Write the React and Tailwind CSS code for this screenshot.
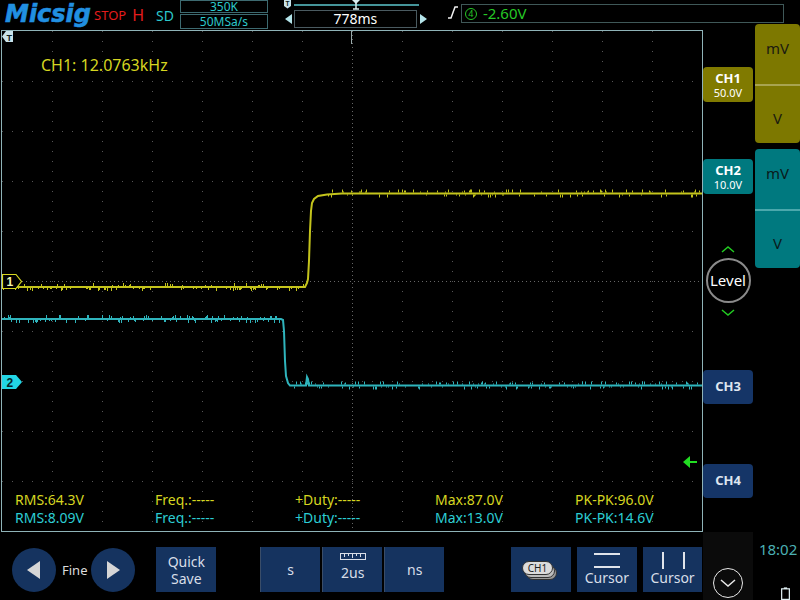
import React from "react";

function rng(seed) {
  let s = seed;
  return () => {
    s = (s * 1103515245 + 12345) % 2147483648;
    return s / 2147483648;
  };
}

function ticks(seed, x0, x1, y, density, upProb) {
  const r = rng(seed);
  let d = "";
  for (let x = x0; x < x1; x += 1) {
    if (r() < density) {
      const h = 1 + Math.floor(r() * 3);
      if (r() < upProb) d += `M${x + 0.5} ${y - 1} v${-h} `;
      else d += `M${x + 0.5} ${y + 1} v${h} `;
    }
  }
  return d;
}

const YELLOW_PTS =
  "0,256 303,256 305,252 306,248 307,230 308,200 309,180 310,172 312,168 316,165 325,163.5 340,162.5 700,162.5";
const CYAN_PTS =
  "0,288 279,288 281,289 282,300 283,330 284,345 286,352 288,354.5 304,354.5 305,346 306,348 307,354.5 700,354.5";

function Grid() {
  const vx = [50, 100, 150, 200, 250, 300, 400, 450, 500, 550, 600, 650];
  const hy = [50, 100, 150, 200, 300, 350, 400, 450];
  return (
    <g>
      {vx.map((x) => (
        <line key={"v" + x} x1={x + 0.5} y1={0} x2={x + 0.5} y2={500} stroke="#555" strokeWidth="1" strokeDasharray="1 9" />
      ))}
      {hy.map((y) => (
        <line key={"h" + y} x1={0} y1={y + 0.5} x2={700} y2={y + 0.5} stroke="#555" strokeWidth="1" strokeDasharray="1 9" />
      ))}
      <line x1={350.5} y1={0} x2={350.5} y2={500} stroke="#666" strokeWidth="1" strokeDasharray="1 3" />
      <line x1={0} y1={250.5} x2={700} y2={250.5} stroke="#666" strokeWidth="1" strokeDasharray="1 3" />
      <line x1={349.5} y1={0} x2={349.5} y2={13} stroke="#9aa" strokeWidth="1" />
    </g>
  );
}

function Screen() {
  const yT1 = ticks(7, 0, 302, 256, 0.3, 0.25);
  const yT2 = ticks(11, 318, 700, 162.5, 0.22, 0.6);
  const cT1 = ticks(23, 0, 278, 288, 0.3, 0.5);
  const cT2 = ticks(31, 290, 700, 354.5, 0.3, 0.5);
  return (
    <div className="relative ml-[1px] w-[702px] h-[502px] border border-[#8fb3b8] flex flex-col">
      <svg className="absolute left-0 top-0" width="700" height="500" viewBox="0 0 700 500">
        <Grid />
        <polyline points={YELLOW_PTS} fill="none" stroke="#c4c41c" strokeWidth="2" />
        <path d={yT1 + yT2} stroke="#c4c41c" strokeWidth="1" />
        <polyline points={CYAN_PTS} fill="none" stroke="#2fb4bc" strokeWidth="2" />
        <path d={cT1 + cT2} stroke="#2fb4bc" strokeWidth="1" />
        {/* T marker */}
        <polygon points="0,5.5 4,0 11,0 11,11 4,11" fill="#c8e2ea" />
        <text x="4.5" y="9.5" fontSize="9" fontWeight="bold" fill="#102020" fontFamily="Liberation Sans, sans-serif">T</text>
        {/* marker 1 */}
        <polygon points="0.5,243.5 14,243.5 19.5,250.5 14,257.5 0.5,257.5" fill="#000" stroke="#d8d820" strokeWidth="1.2" />
        <text x="4.5" y="255" fontSize="12" fontWeight="bold" fill="#f4f4b0" fontFamily="Liberation Sans, sans-serif">1</text>
        {/* marker 2 */}
        <polygon points="0,344 14,344 20,351 14,358 0,358" fill="#22d6e6" />
        <text x="4.5" y="355.5" fontSize="12" fontWeight="bold" fill="#06252a" fontFamily="Liberation Sans, sans-serif">2</text>
        {/* trigger level arrow */}
        <polygon points="681,431 688,425 688,437" fill="#22dd22" />
        <line x1="687" y1="431" x2="695" y2="431" stroke="#22dd22" strokeWidth="2" />
      </svg>
      <div className="relative pl-[39px] pt-[24px] text-[16px] leading-[20px] text-[#d6d620]">CH1: 12.0763kHz</div>
      <div className="flex-1" />
      <div className="relative grid grid-cols-[repeat(5,140px)] pl-[13px] pb-[4px] text-[14px] leading-[18px]">
        <span className="text-[#d6d620]">RMS:64.3V</span>
        <span className="text-[#d6d620]">Freq.:-----</span>
        <span className="text-[#d6d620]">+Duty:-----</span>
        <span className="text-[#d6d620]">Max:87.0V</span>
        <span className="text-[#d6d620]">PK-PK:96.0V</span>
        <span className="text-[#2ccdd4]">RMS:8.09V</span>
        <span className="text-[#2ccdd4]">Freq.:-----</span>
        <span className="text-[#2ccdd4]">+Duty:-----</span>
        <span className="text-[#2ccdd4]">Max:13.0V</span>
        <span className="text-[#2ccdd4]">PK-PK:14.6V</span>
      </div>
    </div>
  );
}

function Chevron({ down }) {
  return (
    <svg width="14" height="7" viewBox="0 0 14 7" className="mx-auto block">
      {down ? (
        <polyline points="1,1 7,6 13,1" fill="none" stroke="#22cc22" strokeWidth="1.5" />
      ) : (
        <polyline points="1,6 7,1 13,6" fill="none" stroke="#22cc22" strokeWidth="1.5" />
      )}
    </svg>
  );
}

function RightPanel() {
  return (
    <div className="w-[97px] flex">
      <div className="w-[50px] flex flex-col">
        <div className="mt-[37px] h-[35px] rounded-[4px] bg-[#807a00] flex flex-col items-center justify-center text-white">
          <span className="text-[13px] leading-[15px] font-bold">CH1</span>
          <span className="text-[11px] leading-[13px]">50.0V</span>
        </div>
        <div className="mt-[57px] h-[35px] rounded-[4px] bg-[#00797f] flex flex-col items-center justify-center text-white">
          <span className="text-[13px] leading-[15px] font-bold">CH2</span>
          <span className="text-[11px] leading-[13px]">10.0V</span>
        </div>
        <div className="mt-[52px]">
          <Chevron />
        </div>
        <div className="mt-[5px] mx-auto w-[45px] h-[45px] rounded-full border-2 border-[#8a8a8a] flex items-center justify-center text-[15px] text-white">
          Level
        </div>
        <div className="mt-[6px]">
          <Chevron down />
        </div>
        <div className="mt-[54px] h-[34px] rounded-[4px] bg-[#153567] flex items-center justify-center text-[13px] font-bold text-[#dfe6f0]">
          CH3
        </div>
        <div className="mt-[60px] h-[34px] rounded-[4px] bg-[#153567] flex items-center justify-center text-[13px] font-bold text-[#dfe6f0]">
          CH4
        </div>
      </div>
      <div className="ml-[2px] w-[45px] -mt-[6px] flex flex-col">
        <div className="h-[119px] rounded-[4px] bg-[#7d7800] flex flex-col text-[15px] text-[#1a1a10]">
          <div className="h-[60px] pt-[14px] text-center leading-[20px]">mV</div>
          <div className="h-[2px] bg-[#a8a450]" />
          <div className="flex-1 pt-[22px] text-center leading-[20px]">V</div>
        </div>
        <div className="mt-[6px] h-[119px] rounded-[4px] bg-[#00797f] flex flex-col text-[15px] text-[#0a1a1a]">
          <div className="h-[60px] pt-[14px] text-center leading-[20px]">mV</div>
          <div className="h-[2px] bg-[#4aa8ac]" />
          <div className="flex-1 pt-[22px] text-center leading-[20px]">V</div>
        </div>
      </div>
    </div>
  );
}

function TopBar() {
  return (
    <div className="h-[30px] flex items-start">
      <span className="ml-[5px] mt-[0px] text-[24px] leading-[28px] font-bold italic font-['DejaVu_Sans',sans-serif] text-[#2190e2] [-webkit-text-stroke:0.6px_#2190e2]">
        Micsig
      </span>
      <span className="ml-[3px] mt-[7px] text-[13px] leading-[16px] text-[#e41c1c]">STOP</span>
      <span className="ml-[6px] mt-[6px] text-[16px] leading-[18px] text-[#e41c1c]">H</span>
      <span className="ml-[12px] mt-[7px] text-[14px] leading-[17px] text-[#2cc8cc]">SD</span>
      <div className="ml-[6px] w-[88px] flex flex-col">
        <div className="h-[13px] border border-[#3d6a70] flex items-center justify-center text-[12px] leading-[12px] text-[#2cc8cc]">350K</div>
        <div className="mt-[1px] h-[15px] border border-[#3d6a70] flex items-center justify-center text-[12px] leading-[13px] text-[#2cc8cc]">50MSa/s</div>
      </div>
      <div className="ml-[14px] w-[147px] flex flex-col">
        <svg width="147" height="10" viewBox="0 0 147 10">
          <polygon points="2,0 9,0 9,6 5.5,8.5 2,6" fill="#c8e2ea" />
          <text x="3.5" y="6" fontSize="6.5" fontWeight="bold" fill="#102020" fontFamily="Liberation Sans, sans-serif">T</text>
          <line x1="12" y1="5" x2="137" y2="5" stroke="#5cc6cc" strokeWidth="1.5" />
          <polygon points="70,0 78,0 74,4" fill="#d8eef0" />
          <line x1="74" y1="3" x2="74" y2="9" stroke="#d8eef0" strokeWidth="1.5" />
          <line x1="71" y1="9" x2="77" y2="9" stroke="#d8eef0" strokeWidth="1.5" />
        </svg>
        <div className="flex items-center">
          <svg width="12" height="18" viewBox="0 0 12 18">
            <polygon points="10,4 10,14 3,9" fill="#b4e4ea" />
          </svg>
          <div className="w-[123px] h-[18px] border border-[#4a5a60] text-center text-[14px] leading-[16px] text-white">778ms</div>
          <svg width="12" height="18" viewBox="0 0 12 18">
            <polygon points="3,4 3,14 10,9" fill="#b4e4ea" />
          </svg>
        </div>
      </div>
      <svg className="ml-[19px] mt-[6px]" width="11" height="13" viewBox="0 0 11 13">
        <polyline points="0,12 3,12 7,1 10,1" fill="none" stroke="#f0f0f0" strokeWidth="1.5" />
      </svg>
      <div className="ml-[2px] mt-[4px] w-[323px] h-[19px] border border-[#3f5858] flex items-center text-[#26c826]">
        <span className="ml-[3px] w-[12px] h-[12px] rounded-full border border-[#26c826] flex items-center justify-center text-[9px] leading-[9px]">4</span>
        <span className="ml-[6px] text-[15px] leading-[17px]">-2.60V</span>
      </div>
    </div>
  );
}

function NavBtn({ dir }) {
  return (
    <div className="mt-[16px] w-[44px] h-[44px] rounded-full bg-[#15335f] flex items-center justify-center">
      <svg width="16" height="20" viewBox="0 0 16 20">
        {dir === "l" ? (
          <polygon points="14,1 14,19 1,10" fill="#d6d6d6" />
        ) : (
          <polygon points="2,1 2,19 15,10" fill="#d6d6d6" />
        )}
      </svg>
    </div>
  );
}

function BottomBar() {
  const btn = "mt-[15px] h-[45px] bg-[#15335f] flex flex-col items-center text-[14px] text-[#d8dee8]";
  return (
    <div className="h-[68px] flex items-start">
      <div className="ml-[12px]">
        <NavBtn dir="l" />
      </div>
      <span className="ml-[6px] mt-[29px] text-[13px] leading-[18px] text-[#dcdcdc]">Fine</span>
      <div className="ml-[4px]">
        <NavBtn dir="r" />
      </div>
      <div className={"ml-[21px] w-[60px] justify-center leading-[17px] " + btn}>
        <span>Quick</span>
        <span>Save</span>
      </div>
      <div className="ml-[44px] mt-[15px] h-[45px] flex">
        <div className="w-[60px] h-full bg-[#15335f] border-l border-[#3a4d68] flex items-center justify-center text-[14px] text-[#d8dee8]">s</div>
        <div className="ml-[2px] w-[60px] h-full bg-[#15335f] border-l border-[#3a4d68] flex flex-col items-center text-[14px] text-[#d8dee8]">
          <svg className="mt-[6px]" width="26" height="8" viewBox="0 0 26 8">
            <rect x="0.5" y="0.5" width="25" height="6" fill="none" stroke="#d8dee8" strokeWidth="1" />
            <path d="M4.5 1v3M8.5 1v2M12.5 1v4M16.5 1v2M20.5 1v3" stroke="#d8dee8" strokeWidth="1" />
          </svg>
          <span className="mt-[3px] leading-[18px]">2us</span>
        </div>
        <div className="ml-[2px] w-[60px] h-full bg-[#15335f] border-l border-[#3a4d68] flex items-center justify-center text-[14px] text-[#d8dee8]">ns</div>
      </div>
      <div className={"ml-[67px] w-[60px] justify-center " + btn}>
        <svg width="40" height="22" viewBox="0 0 40 22">
          <rect x="5.5" y="7.5" width="30" height="13" rx="6.5" fill="#9a9a9a" stroke="#333" />
          <rect x="3.5" y="5.5" width="30" height="13" rx="6.5" fill="#bdbdbd" stroke="#333" />
          <rect x="1.5" y="2.5" width="30" height="13" rx="6.5" fill="#dcdcdc" stroke="#333" />
          <text x="16.5" y="12.5" textAnchor="middle" fontSize="10" fill="#222" fontFamily="Noto Sans, sans-serif">CH1</text>
        </svg>
      </div>
      <div className={"ml-[6px] w-[60px] " + btn}>
        <svg className="mt-[6px]" width="28" height="16" viewBox="0 0 28 16">
          <line x1="1" y1="1" x2="27" y2="1" stroke="#e0e4ea" strokeWidth="2" />
          <line x1="1" y1="14" x2="27" y2="14" stroke="#e0e4ea" strokeWidth="2" />
        </svg>
        <span className="leading-[18px]">Cursor</span>
      </div>
      <div className={"ml-[6px] w-[60px] " + btn}>
        <svg className="mt-[5px]" width="28" height="17" viewBox="0 0 28 17">
          <line x1="4" y1="0" x2="4" y2="17" stroke="#e0e4ea" strokeWidth="2" />
          <line x1="25" y1="0" x2="25" y2="17" stroke="#e0e4ea" strokeWidth="2" />
        </svg>
        <span className="leading-[18px]">Cursor</span>
      </div>
      <div className="ml-[1px] w-[50px] h-full bg-[#0b0b0b] flex justify-center">
        <div className="mt-[36px] w-[30px] h-[30px] rounded-full border-[1.5px] border-[#e8e8e8] flex items-center justify-center">
          <svg width="16" height="9" viewBox="0 0 16 9">
            <polyline points="1,1 8,7 15,1" fill="none" stroke="#e8e8e8" strokeWidth="1.5" />
          </svg>
        </div>
      </div>
      <div className="w-[47px] h-full flex flex-col items-center">
        <span className="mt-[8px] ml-[3px] text-[15px] leading-[18px] text-[#4bb0b4]">18:02</span>
        <svg className="mt-[29px] ml-[17px]" width="11" height="16" viewBox="0 0 11 16">
          <rect x="3.5" y="0.5" width="4" height="2" fill="#dfeef2" />
          <rect x="0.75" y="2.25" width="9.5" height="13" fill="none" stroke="#dfeef2" strokeWidth="1.5" />
        </svg>
      </div>
    </div>
  );
}

export default function App() {
  return (
    <div className="w-[800px] h-[600px] bg-black overflow-hidden font-['Noto_Sans',sans-serif] text-white flex flex-col select-none">
      <TopBar />
      <div className="flex h-[502px]">
        <Screen />
        <RightPanel />
      </div>
      <BottomBar />
    </div>
  );
}
